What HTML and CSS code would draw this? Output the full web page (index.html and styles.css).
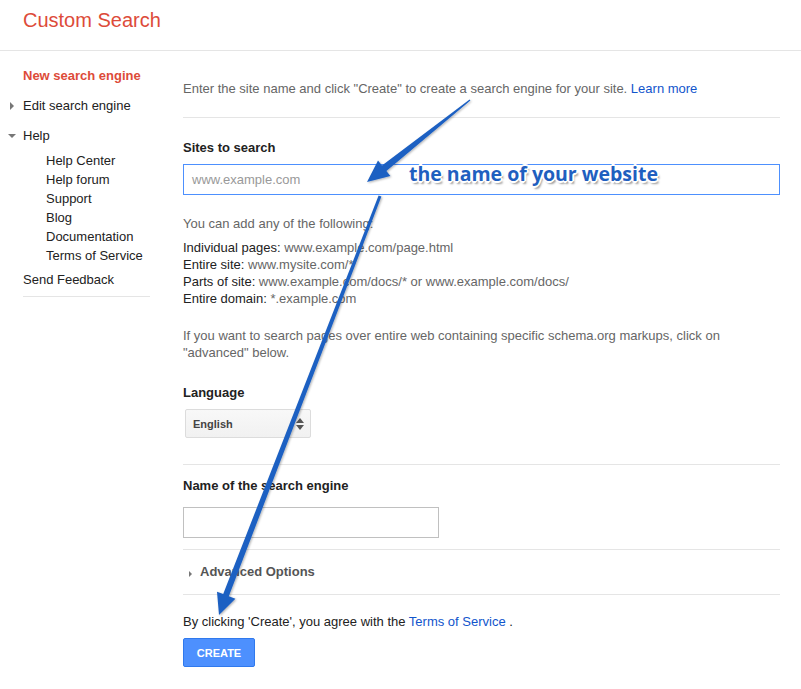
FILE: index.html
```html
<!DOCTYPE html>
<html lang="en">
<head>
    <meta charset="UTF-8">
    <title>Custom Search</title>
    <link rel="stylesheet" href="styles.css">
</head>
<body>
    <div class="header">
        <div class="logo">Custom Search</div>
    </div>

    <div class="layout">
        <div class="sidebar">
            <div class="nav-item active">New search engine</div>
            <div class="nav-item"><span class="tri tri-right"></span>Edit search engine</div>
            <div class="nav-item"><span class="tri tri-down"></span>Help</div>
            <ul class="sub-nav">
                <li>Help Center</li>
                <li>Help forum</li>
                <li>Support</li>
                <li>Blog</li>
                <li>Documentation</li>
                <li>Terms of Service</li>
            </ul>
            <div class="nav-item feedback">Send Feedback</div>
        </div>

        <div class="main">
            <p class="intro">Enter the site name and click "Create" to create a search engine for your site. <a href="#">Learn more</a></p>
            <hr>

            <div class="label first">Sites to search</div>
            <div class="input wide focused">www.example.com</div>

            <p class="hint">You can add any of the following:</p>
            <p class="examples">
                <span class="dark">Individual pages:</span> www.example.com/page.html<br>
                <span class="dark">Entire site:</span> www.mysite.com/*<br>
                <span class="dark">Parts of site:</span> www.example.com/docs/* or www.example.com/docs/<br>
                <span class="dark">Entire domain:</span> *.example.com
            </p>
            <p class="schema">If you want to search pages over entire web containing specific schema.org markups, click on "advanced" below.</p>

            <div class="label lang">Language</div>
            <div class="select">
                <span>English</span>
                <span class="updown"><i class="up"></i><i class="down"></i></span>
            </div>
            <hr class="after-select">

            <div class="label name">Name of the search engine</div>
            <div class="input short"></div>
            <hr class="after-name">

            <div class="advanced"><span class="tri tri-small"></span>Advanced Options</div>
            <hr class="after-adv">

            <p class="agree">By clicking 'Create', you agree with the <a href="#">Terms of Service</a> .</p>
            <button class="create">CREATE</button>
        </div>
    </div>

    <!-- annotation drawn over the page -->
    <svg class="overlay" width="801" height="689" viewBox="0 0 801 689">
        <defs>
            <filter id="shade" x="-20%" y="-20%" width="140%" height="140%">
                <feDropShadow dx="1" dy="1" stdDeviation="1" flood-color="#000" flood-opacity="0.3"/>
            </filter>
        </defs>
        <g fill="#1d60c2" filter="url(#shade)">
            <polygon points="470.4,100.4 386.4,171 390.4,176.1 367,182 378,160.5 382,165.6 469.6,99.6"/>
            <polygon points="381.4,196.5 228.8,596.3 235.4,598.8 219,615 217,591.8 223.2,594.1 378.6,195.5"/>
        </g>
    </svg>
    <div class="callout">the name of your website</div>
</body>
</html>
```

FILE: styles.css
```css
body {
    margin: 0;
    font-family: "Liberation Sans", Arial, sans-serif;
    font-size: 13px;
    color: #222;
    background: #fff;
    position: relative;
}

a {
    color: #15c;
    text-decoration: none;
}

.header {
    height: 50px;
    border-bottom: 1px solid #e5e5e5;
}

.logo {
    padding: 8px 0 0 23px;
    font-size: 20px;
    line-height: 24px;
    color: #dd4b39;
}

.layout {
    display: flex;
}

.sidebar {
    width: 127px;
    margin-left: 23px;
    padding-top: 17px;
    padding-bottom: 9px;
    border-bottom: 1px solid #e5e5e5;
    align-self: flex-start;
}

.nav-item {
    position: relative;
    line-height: 15px;
    margin-top: 15px;
}

.nav-item.active {
    margin-top: 0;
    color: #dd4b39;
    font-weight: bold;
}

.nav-item.feedback {
    margin-top: 7px;
}

.tri {
    position: absolute;
    width: 0;
    height: 0;
}

.tri-right {
    left: -13px;
    top: 4px;
    border-top: 4px solid transparent;
    border-bottom: 4px solid transparent;
    border-left: 4px solid #777;
}

.tri-down {
    left: -15px;
    top: 6px;
    border-left: 4px solid transparent;
    border-right: 4px solid transparent;
    border-top: 4px solid #777;
}

.sub-nav {
    list-style: none;
    margin: 8px 0 0 23px;
    padding: 0;
}

.sub-nav li {
    line-height: 19px;
}

.main {
    width: 597px;
    margin-left: 33px;
    padding-top: 30px;
}

.main p {
    margin: 0;
}

.intro {
    line-height: 15px;
    color: #666;
}

hr {
    border: 0;
    border-top: 1px solid #e5e5e5;
    margin: 21px 0 0;
}

.label {
    font-weight: bold;
    line-height: 15px;
    color: #222;
}

.label.first {
    margin-top: 22px;
}

.input {
    box-sizing: border-box;
    height: 31px;
    margin-top: 9px;
    border: 1px solid #c0c0c0;
    padding: 0 8px;
    line-height: 29px;
    color: #999;
}

.input.wide {
    width: 597px;
}

.input.focused {
    border-color: #4d90fe;
}

.input.short {
    width: 256px;
    margin-top: 14px;
}

.hint {
    margin-top: 20px !important;
    line-height: 17px;
    color: #666;
}

.examples {
    margin-top: 7px !important;
    line-height: 17px;
    color: #666;
}

.dark {
    color: #222;
}

.schema {
    margin-top: 20px !important;
    line-height: 17px;
    color: #666;
}

.label.lang {
    margin-top: 24px;
}

.select {
    box-sizing: border-box;
    width: 126px;
    height: 29px;
    margin: 9px 0 0 2px;
    border: 1px solid #dcdcdc;
    border-radius: 2px;
    background: linear-gradient(#f8f8f8, #f1f1f1);
    display: flex;
    align-items: center;
    justify-content: space-between;
    padding: 0 6px 0 7px;
    font-size: 11px;
    font-weight: bold;
    color: #444;
}

.updown {
    display: flex;
    flex-direction: column;
    gap: 2px;
}

.updown i {
    width: 0;
    height: 0;
    border-left: 4px solid transparent;
    border-right: 4px solid transparent;
}

.updown .up {
    border-bottom: 5px solid #555;
}

.updown .down {
    border-top: 5px solid #555;
}

hr.after-select {
    margin-top: 26px;
}

.label.name {
    margin-top: 13px;
}

hr.after-name {
    margin-top: 11px;
}

.advanced {
    position: relative;
    margin-top: 14px;
    padding-left: 17px;
    line-height: 15px;
    font-weight: bold;
    color: #555;
}

.tri-small {
    left: 6px;
    top: 7px;
    border-top: 3px solid transparent;
    border-bottom: 3px solid transparent;
    border-left: 3px solid #777;
}

hr.after-adv {
    margin-top: 15px;
}

.agree {
    margin-top: 19px !important;
    line-height: 15px;
}

.create {
    display: block;
    margin-top: 9px;
    width: 72px;
    height: 29px;
    border: 1px solid #3079ed;
    border-radius: 2px;
    background: #4d90fe;
    color: #fff;
    font-family: "Liberation Sans", Arial, sans-serif;
    font-size: 11px;
    font-weight: bold;
    padding: 0;
}

.overlay {
    position: absolute;
    left: 0;
    top: 0;
    pointer-events: none;
}

.callout {
    position: absolute;
    left: 409px;
    top: 161px;
    font-family: "Open Sans", sans-serif;
    font-weight: bold;
    font-size: 19.5px;
    line-height: 26px;
    color: #1f5fbf;
    text-shadow:
        -2px 0 0 #fff, 2px 0 0 #fff, 0 -2px 0 #fff, 0 2px 0 #fff,
        -1px -1px 0 #fff, 1px 1px 0 #fff, -1px 1px 0 #fff, 1px -1px 0 #fff,
        2px 3px 2px rgba(0, 0, 0, 0.4);
}
```
